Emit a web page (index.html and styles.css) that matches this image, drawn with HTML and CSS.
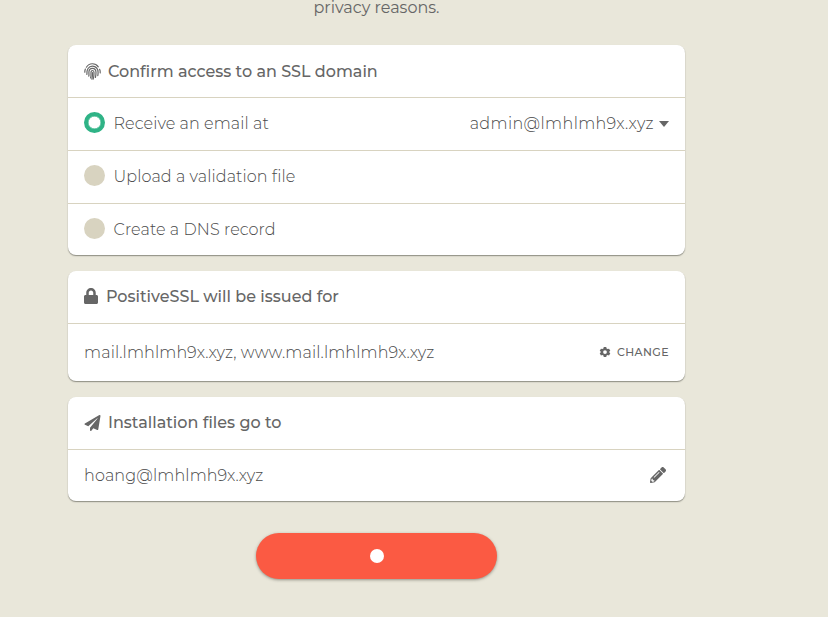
FILE: index.html
```html
<!DOCTYPE html>
<html lang="en">
<head>
<meta charset="utf-8">
<title>SSL activation</title>
<link rel="stylesheet" href="styles.css">
</head>
<body>
<main class="page">
  <p class="intro">privacy reasons.</p>

  <section class="card">
    <h2 class="row head first">
      <svg class="icon finger" viewBox="0 0 17 17"><g fill="none" stroke="#666" stroke-width="1.2" stroke-linecap="round"><path d="M2.400 4.200C5.200-.3 11.300-.4 14.300 3.800"/><path d="M.8 9.200C.8 7.800 1 7 1.400 6.100M15.600 6.300c.5 1 .7 2.200.6 3.600"/><path d="M2.900 11.400C2.400 6.600 4.600 3.200 8.400 3.200c3.600 0 5.800 2.700 5.700 6.400 0 1.200-.1 2.100-.3 3"/><path d="M4.800 13.100c.3-1.200.2-2.300.1-3.600C4.800 7 6.200 5.300 8.400 5.300c2.300 0 3.600 1.700 3.600 4.100 0 1.900-.2 3.400-.6 5.100"/><path d="M6.600 15c.5-2 .5-3.500.4-5.400 0-1.300.5-2.100 1.500-2.100s1.500.8 1.500 2c.1 2.500-.2 4.500-.8 6.600"/><path d="M8.500 9.600c.1 2.300-.1 4.300-.6 6.500"/></g></svg>
      <span>Confirm access to an SSL domain</span>
    </h2>
    <label class="row option"><i class="radio on"></i><span class="option-text">Receive an email at</span><span class="end select"><span class="email">admin@lmhlmh9x.xyz</span><i class="caret"></i></span></label>
    <label class="row option"><i class="radio"></i><span class="option-text">Upload a validation file</span></label>
    <label class="row option last"><i class="radio"></i><span class="option-text">Create a DNS record</span></label>
  </section>

  <section class="card">
    <h2 class="row head">
      <svg class="icon lock" viewBox="0 0 448 512"><path fill="#666" d="M400 224h-24v-72C376 68.200 307.800 0 224 0S72 68.200 72 152v72H48c-26.500 0-48 21.500-48 48v192c0 26.500 21.500 48 48 48h352c26.500 0 48-21.500 48-48V272c0-26.500-21.500-48-48-48zm-104 0H152v-72c0-39.700 32.300-72 72-72s72 32.300 72 72v72z"/></svg>
      <span>PositiveSSL will be issued for</span>
    </h2>
    <div class="row domains"><span class="domain-list">mail.lmhlmh9x.xyz, www.mail.lmhlmh9x.xyz</span>
      <span class="end change"><svg class="gear" viewBox="0 0 24 24"><path fill="#666" fill-rule="evenodd" d="M9 0h6l.8 3.600 2.400 1.400 3.500-1.100 3 5.200L22 11.600v.8l2.700 2.500-3 5.200-3.500-1.100-2.400 1.400L15 24H9l-.8-3.600L5.800 19l-3.500 1.100-3-5.200L2 12.400v-.8L-.7 9.100l3-5.200L5.800 5l2.400-1.400zM12 7.500a4.500 4.500 0 1 0 0 9 4.500 4.500 0 0 0 0-9z"/></svg><span>CHANGE</span></span>
    </div>
  </section>

  <section class="card">
    <h2 class="row head">
      <svg class="icon plane" viewBox="0 0 512 512"><path fill="#666" d="M476 3.200L12.500 270.600c-18.100 10.400-15.800 35.600 2.200 43.200L121 358.400l287.300-253.200c5.500-4.900 13.300 2.600 8.600 8.300L176 407v80.500c0 23.600 28.500 32.900 42.500 15.800L282 426l124.600 52.200c14.200 6 30.400-2.900 33-18.200l72-432C515 7.800 493.300-6.800 476 3.200z"/></svg>
      <span>Installation files go to</span>
    </h2>
    <div class="row last"><span class="recipient">hoang@lmhlmh9x.xyz</span>
      <svg class="end pencil" viewBox="0 0 512 512"><path fill="#666" d="M497.900 142.100l-46.100 46.100c-4.700 4.700-12.300 4.700-17 0l-111-111c-4.700-4.700-4.700-12.300 0-17l46.100-46.100c18.700-18.700 49.100-18.700 67.900 0l60.100 60.100c18.800 18.700 18.800 49.100 0 67.900zM284.200 99.800L21.600 362.400.4 483.900c-2.900 16.400 11.400 30.600 27.800 27.800l121.500-21.300 262.600-262.600c4.700-4.700 4.700-12.300 0-17l-111-111c-4.800-4.700-12.400-4.700-17.100 0zM124.100 339.900c-5.500-5.500-5.500-14.300 0-19.800l154-154c5.500-5.500 14.300-5.500 19.800 0s5.500 14.300 0 19.800l-154 154c-5.500 5.500-14.300 5.500-19.800 0zM88 424h48v36.300l-64.500 11.300-31.100-31.100L51.700 376H88v48z"/></svg>
    </div>
  </section>

  <button class="submit" aria-label="Loading"><i class="dot"></i></button>
</main>
</body>
</html>
```
FILE: styles.css
```css
* { box-sizing: border-box; }
body {
  margin: 0;
  height: 617px;
  overflow: hidden;
  background: #e9e7da;
  color: #4a4a4a;
  font: 300 16px/24px Montserrat, Inter, "Open Sans", sans-serif;
}
.page { width: 617px; margin-left: 68px; }
.intro { margin: 0; height: 45px; line-height: 16px; text-align: center; font-weight: 400; color: #666; }
.card {
  margin-bottom: 16px;
  background: #fff;
  border-radius: 8px;
  box-shadow: 0 1px 1px rgba(60, 60, 50, .45), 0 1px 2px rgba(60, 60, 50, .12);
}
.row {
  display: flex;
  align-items: center;
  height: 53px;
  margin: 0;
  padding: 0 16px;
  border-bottom: 1px solid #d8d3c0;
  white-space: nowrap;
}
.head { font-size: 16px; font-weight: 500; color: #666; }
.first { padding-top: 1px; }
.last, .option.last { height: 51px; border: 0; }
.domains { height: 57px; border: 0; }
.icon { flex: none; height: 16px; margin-bottom: 1px; }
.finger { width: 17px; height: 17px; margin-right: 7px; }
.lock { width: 14px; margin: 0 8px 2px 0; }
.plane { width: 17px; margin-right: 7px; }
.radio { width: 21px; height: 21px; margin: 0 8.5px 3px 0; border-radius: 50%; background: #d8d3c0; }
.radio.on { border: 4px solid #2fb386; background: #fff; box-shadow: inset 0 0 0 .5px #2fb386; }
.option.last .radio { margin-bottom: 2px; }
.option-text { letter-spacing: .09px; }
.email { letter-spacing: .38px; }
.domain-list { letter-spacing: .14px; }
.recipient { letter-spacing: .13px; }
.end { margin-left: auto; }
.select, .change { display: flex; align-items: center; }
.caret { margin-left: 5px; border: 5px solid transparent; border-top: 6px solid #666; border-bottom: 0; }
.change { margin-bottom: 1px; font-size: 11px; font-weight: 500; letter-spacing: .4px; color: #666; }
.gear { width: 10px; height: 10px; margin-right: 7px; overflow: visible; }
.pencil { width: 16px; height: 16px; margin-right: 3px; margin-bottom: 2px; }
.submit {
  display: flex;
  align-items: center;
  justify-content: center;
  width: 241px;
  height: 46px;
  margin: 32px auto 0;
  border: 0;
  border-radius: 23px;
  background: #fb5a43;
  box-shadow: 0 1px 3px rgba(60, 60, 50, .5);
}
.dot { width: 14px; height: 14px; border-radius: 50%; background: #fff; }
```
